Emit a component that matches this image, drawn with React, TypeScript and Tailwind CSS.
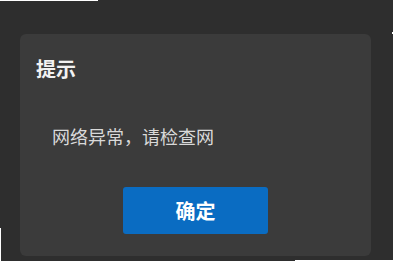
export default function App() {
  return (
    <div
      className="relative w-[393px] h-[261px] overflow-hidden bg-[#2e2e2e] pt-[34px] pl-[20px]"
      style={{ fontFamily: '"Noto Sans CJK SC", "Noto Sans", sans-serif' }}
    >
      <div className="w-[351px] h-[222px] rounded-[6px] bg-[#3b3b3b] flex flex-col">
        <div className="pt-[21px] pl-[16px] text-[20px] leading-[28px] font-bold text-[#f2f2f2]">提示</div>
        <div className="mt-[40px] pl-[32px] text-[18px] leading-[26px] text-[#d9d9d9]">网络异常，请检查网</div>
        <div className="mt-[38px] flex justify-center">
          <button className="w-[145px] h-[47px] rounded-[3px] bg-[#0a6cc2] text-white text-[20px] font-bold">
            确定
          </button>
        </div>
      </div>

      {/* screenshot edge leftovers */}
      <div className="absolute left-0 top-0 w-[98px] h-px bg-white" />
      <div className="absolute right-0 top-[32px] w-px h-[2px] bg-white" />
      <div className="absolute left-0 top-[228px] w-px h-[33px] bg-white" />
      <div className="absolute left-[295px] bottom-0 w-[98px] h-px bg-white" />
    </div>
  )
}
